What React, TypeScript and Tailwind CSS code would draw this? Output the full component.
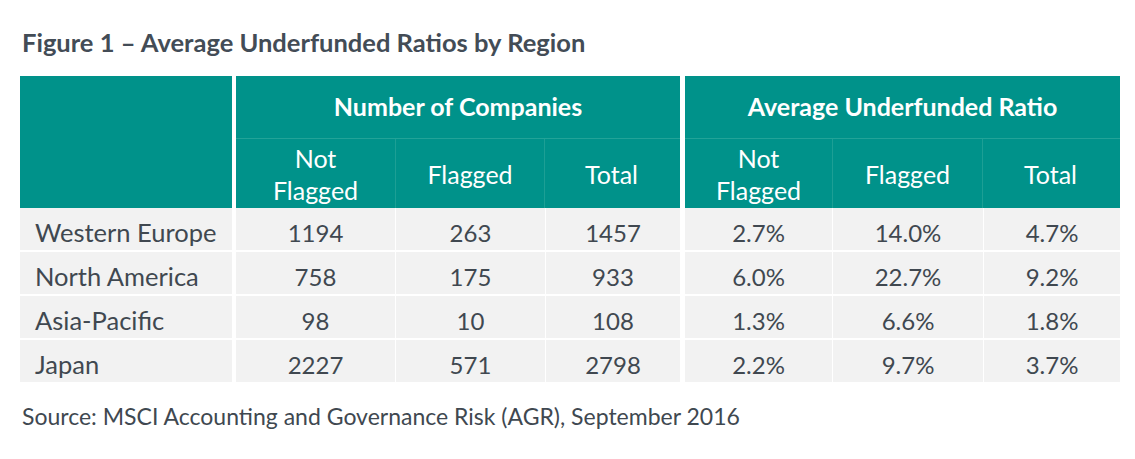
import React from "react";

interface Row {
  region: string;
  companies: [string, string, string];
  ratios: [string, string, string];
}

const rows: Row[] = [
  { region: "Western Europe", companies: ["1194", "263", "1457"], ratios: ["2.7%", "14.0%", "4.7%"] },
  { region: "North America", companies: ["758", "175", "933"], ratios: ["6.0%", "22.7%", "9.2%"] },
  { region: "Asia-Pacific", companies: ["98", "10", "108"], ratios: ["1.3%", "6.6%", "1.8%"] },
  { region: "Japan", companies: ["2227", "571", "2798"], ratios: ["2.2%", "9.7%", "3.7%"] },
];

const subHeads = [
  ["Not", "Flagged"],
  ["Flagged"],
  ["Total"],
];

const Group = ({
  title,
  widths,
  values,
}: {
  title: string;
  widths: string[];
  values: string[][];
}) => (
  <div className="flex flex-col">
    {/* Group title */}
    <div className="h-[63px] flex items-center justify-center bg-[#00928a] border-b border-[#22a398] text-white font-bold text-[25px]">
      {title}
    </div>

    {/* Sub headings */}
    <div className="flex h-[69px] bg-[#00928a]">
      {subHeads.map((lines, i) => (
        <div
          key={i}
          className={`${widths[i]} flex flex-col items-center justify-center text-white text-[25px] leading-[32px] ${
            i > 0 ? "border-l border-[#1d9f95]" : ""
          }`}
        >
          {lines.map((l) => (
            <span key={l}>{l}</span>
          ))}
        </div>
      ))}
    </div>

    {/* Values */}
    <div className="flex flex-col gap-[2px]">
      {values.map((vals, r) => (
        <div key={r} className="flex gap-px h-[42px]">
          {vals.map((v, i) => (
            <div
              key={i}
              className={`${widths[i]} flex items-center justify-center pt-[7px] bg-[#f2f2f2] text-[#404850] text-[24px]`}
            >
              {v}
            </div>
          ))}
        </div>
      ))}
    </div>
  </div>
);

export default function App() {
  return (
    <div className="w-[1135px] h-[459px] bg-white font-['Lato',sans-serif] pt-[27px]">
      <h1 className="pl-[22px] text-[25.5px] font-bold text-[#434c56] leading-[31px]">
        Figure 1 – Average Underfunded Ratios by Region
      </h1>

      <div className="flex mt-[18px] ml-[20px]">
        {/* Region column */}
        <div className="flex flex-col w-[212px] mr-[4px]">
          <div className="h-[132px] bg-[#00928a]" />
          <div className="flex flex-col gap-[2px]">
            {rows.map((r) => (
              <div
                key={r.region}
                className="h-[42px] flex items-center pl-[15px] pt-[7px] bg-[#f2f2f2] text-[#404850] text-[25.5px]"
              >
                {r.region}
              </div>
            ))}
          </div>
        </div>

        <div className="mr-[5px]">
          <Group
            title="Number of Companies"
            widths={["w-[159px]", "w-[149px]", "w-[134px]"]}
            values={rows.map((r) => r.companies)}
          />
        </div>

        <Group
          title="Average Underfunded Ratio"
          widths={["w-[147px]", "w-[150px]", "w-[136px]"]}
          values={rows.map((r) => r.ratios)}
        />
      </div>

      <p className="pl-[22px] mt-[17px] text-[23px] text-[#404850]">
        Source: MSCI Accounting and Governance Risk (AGR), September 2016
      </p>
    </div>
  );
}
